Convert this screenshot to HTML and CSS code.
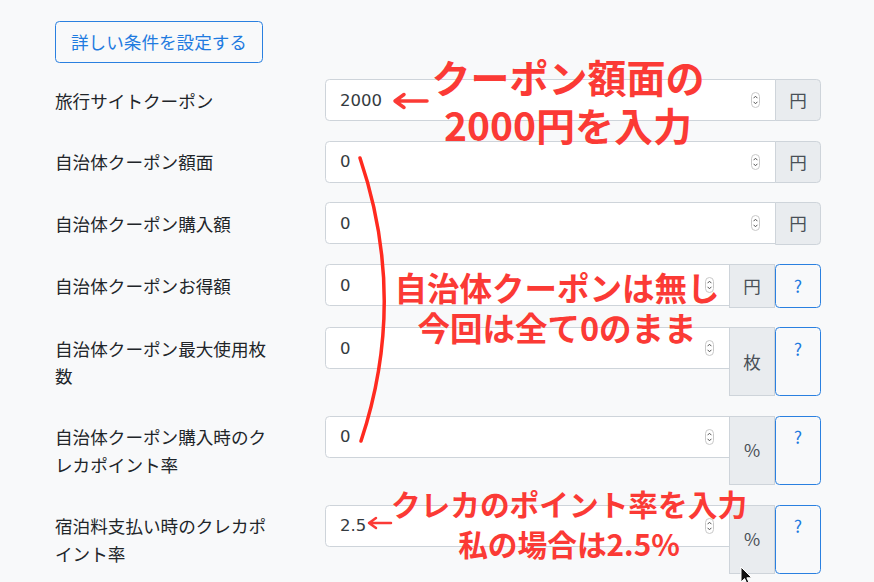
FILE: index.html
```html
<!DOCTYPE html>
<html lang="ja">
<head>
    <meta charset="UTF-8">
    <meta name="viewport" content="width=device-width, initial-scale=1.0">
    <title>クーポン条件</title>
    <link rel="stylesheet" href="styles.css">
</head>
<body>

    <svg width="0" height="0" class="defs">
        <symbol id="spin" viewBox="0 0 9 16">
            <rect x="0.5" y="0.5" width="8" height="15" rx="4" fill="#fff" stroke="#c8c8c8"/>
            <path d="M2.6 6.2 L4.5 4.2 L6.4 6.2" fill="none" stroke="#555" stroke-width="1"/>
            <path d="M2.6 9.8 L4.5 11.8 L6.4 9.8" fill="none" stroke="#555" stroke-width="1"/>
        </symbol>
    </svg>

    <div class="page">
        <button type="button" class="btn-outline">詳しい条件を設定する</button>

        <form class="form">
            <div class="row">
                <label class="row-label">旅行サイトクーポン</label>
                <div class="group">
                    <div class="field"><input type="text" value="2000"><svg class="spin"><use href="#spin"/></svg></div>
                    <span class="addon addon-end">円</span>
                </div>
            </div>

            <div class="row">
                <label class="row-label">自治体クーポン額面</label>
                <div class="group">
                    <div class="field"><input type="text" value="0"><svg class="spin"><use href="#spin"/></svg></div>
                    <span class="addon addon-end">円</span>
                </div>
            </div>

            <div class="row">
                <label class="row-label">自治体クーポン購入額</label>
                <div class="group">
                    <div class="field"><input type="text" value="0"><svg class="spin"><use href="#spin"/></svg></div>
                    <span class="addon addon-end">円</span>
                </div>
            </div>

            <div class="row">
                <label class="row-label">自治体クーポンお得額</label>
                <div class="group">
                    <div class="field"><input type="text" value="0"><svg class="spin"><use href="#spin"/></svg></div>
                    <span class="addon">円</span>
                    <a class="help" href="#">?</a>
                </div>
            </div>

            <div class="row">
                <label class="row-label">自治体クーポン最大使用枚数</label>
                <div class="group">
                    <div class="field"><input type="text" value="0"><svg class="spin"><use href="#spin"/></svg></div>
                    <span class="addon">枚</span>
                    <a class="help" href="#">?</a>
                </div>
            </div>

            <div class="row">
                <label class="row-label">自治体クーポン購入時のクレカポイント率</label>
                <div class="group">
                    <div class="field"><input type="text" value="0"><svg class="spin"><use href="#spin"/></svg></div>
                    <span class="addon">%</span>
                    <a class="help" href="#">?</a>
                </div>
            </div>

            <div class="row">
                <label class="row-label">宿泊料支払い時のクレカポイント率</label>
                <div class="group">
                    <div class="field"><input type="text" value="2.5"><svg class="spin"><use href="#spin"/></svg></div>
                    <span class="addon">%</span>
                    <a class="help" href="#">?</a>
                </div>
            </div>
        </form>

        <!-- hand-drawn notes on top of the form -->
        <div class="notes">
            <svg class="marks" width="874" height="582" viewBox="0 0 874 582">
                <path d="M427 101 H395 M404 94.5 L395 101 L404 107.5" fill="none" stroke="#fb3a35" stroke-width="3.5" stroke-linecap="round" stroke-linejoin="round"/>
                <path d="M360 158 Q408 300 361 441" fill="none" stroke="#ff2a1f" stroke-width="3.5" stroke-linecap="round"/>
                <path d="M391 523 H369 M376 518 L369 523 L376 528" fill="none" stroke="#fb3a35" stroke-width="2.5" stroke-linecap="round" stroke-linejoin="round"/>
            </svg>
            <div class="note note-coupon">クーポン額面の<br>2000円を入力</div>
            <div class="note note-local">自治体クーポンは無し<br>今回は全て0のまま</div>
            <div class="note note-rate">クレカのポイント率を入力<br>私の場合は2.5%</div>
            <svg class="cursor" width="14" height="20" viewBox="0 0 14 20">
                <path d="M1 1 L1 16 L4.6 12.6 L7.2 18.4 L9.4 17.4 L6.9 11.8 L11.8 11.8 Z" fill="#111" stroke="#fff" stroke-width="1"/>
            </svg>
        </div>
    </div>

</body>
</html>
```

FILE: styles.css
```css
body {
    margin: 0;
    background: #f8f9fa;
    color: #212529;
    font-family: "Noto Sans CJK JP", "Noto Sans", sans-serif;
    font-size: 17.6px;
    line-height: 26.4px;
}
.defs {
    position: absolute;
}
.page {
    position: relative;
    width: 874px;
    height: 582px;
    box-sizing: border-box;
    padding: 21px 53px 0 55px;
    overflow: hidden;
}
.btn-outline {
    font: inherit;
    line-height: 26.4px;
    color: #1f7be0;
    background: transparent;
    border: 1px solid #2a80e0;
    border-radius: 4.4px;
    padding: 6.8px 15px;
    cursor: pointer;
}
.form {
    margin-top: 16px;
}
.row {
    display: flex;
    margin-bottom: 19.5px;
}
.row-label {
    flex: 0 0 222px;
    margin-right: 48px;
    padding: 7.5px 0;
    line-height: 27.2px;
}
.group {
    flex: 1;
    display: flex;
    align-items: stretch;
}
.field {
    flex: 1;
    align-self: flex-start;
    display: flex;
    align-items: center;
    height: 42px;
    box-sizing: border-box;
    padding: 0 15px 0 14px;
    background: #fff;
    border: 1px solid #ced4da;
    border-radius: 4.4px 0 0 4.4px;
}
.field input {
    flex: 1;
    min-width: 0;
    border: none;
    outline: none;
    padding: 0;
    background: transparent;
    font-family: "DejaVu Sans", "Noto Sans CJK JP", sans-serif;
    font-size: 16.5px;
    color: #343a40;
}
.spin {
    width: 9px;
    height: 16px;
}
.addon {
    flex: 0 0 46px;
    display: flex;
    align-items: center;
    justify-content: center;
    box-sizing: border-box;
    margin-left: -1px;
    background: #e9ecef;
    border: 1px solid #ced4da;
    color: #495057;
}
.addon-end {
    border-radius: 0 4.4px 4.4px 0;
}
.help {
    flex: 0 0 46px;
    box-sizing: border-box;
    display: block;
    text-align: center;
    text-decoration: none;
    line-height: 26.4px;
    padding: 7.5px 0;
    color: #1f7be0;
    border: 1px solid #2a80e0;
    border-radius: 4.4px;
}
.notes {
    position: absolute;
    left: 0;
    top: 0;
    width: 874px;
    height: 582px;
    pointer-events: none;
}
.marks {
    position: absolute;
    left: 0;
    top: 0;
}
.note {
    position: absolute;
    color: #fb3a35;
    font-weight: 700;
    text-align: center;
    white-space: nowrap;
}
.note-coupon {
    left: 408px;
    top: 52px;
    width: 320px;
    font-size: 39px;
    line-height: 48px;
}
.note-local {
    left: 377px;
    top: 267px;
    width: 360px;
    font-size: 32.5px;
    line-height: 40px;
}
.note-rate {
    left: 379px;
    top: 484px;
    width: 380px;
    font-size: 29.7px;
    line-height: 39.5px;
}
.cursor {
    position: absolute;
    left: 740px;
    top: 566px;
}
```
